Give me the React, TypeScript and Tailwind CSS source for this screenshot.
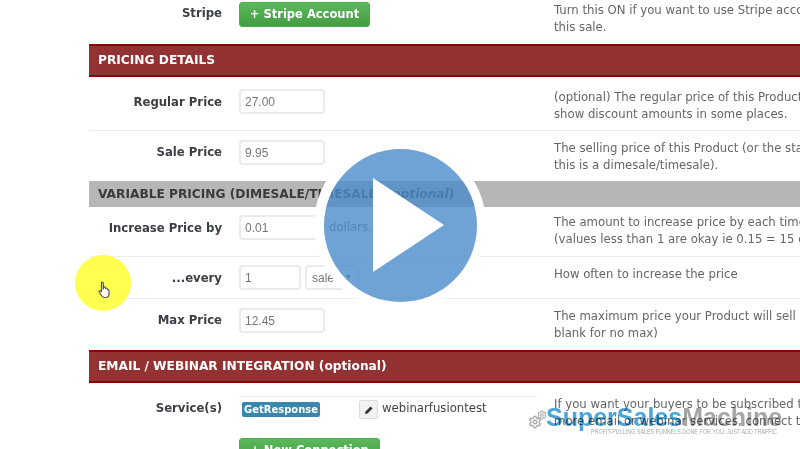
import type { ReactNode } from 'react';
import { Settings } from 'lucide-react';

const SANS = 'font-["DejaVu_Sans",sans-serif]';

function SectionHeader({ children }: { children: ReactNode }) {
  return (
    <div className="h-[33px] flex items-center pl-[9px] bg-[#933232] border-y-2 border-[#8a0505] text-white text-[12.2px] font-bold whitespace-nowrap">
      {children}
    </div>
  );
}

function Row({
  label,
  height,
  line = true,
  labelPt,
  ctlPt,
  descPt,
  children,
  desc,
}: {
  label: string;
  height: string;
  line?: boolean;
  labelPt: string;
  ctlPt: string;
  descPt: string;
  children?: ReactNode;
  desc: string[];
}) {
  return (
    <div className={`flex items-start ${height} ${line ? 'border-b border-[#ececec]' : ''}`}>
      <div className={`w-[133px] shrink-0 text-right text-[11.7px] leading-[17px] font-bold text-[#3c4046] whitespace-nowrap ${labelPt}`}>
        {label}
      </div>
      <div className={`w-[315px] ml-[17px] shrink-0 flex items-center ${ctlPt}`}>{children}</div>
      <div className={`text-[11.7px] leading-[17px] text-[#666] whitespace-nowrap ${descPt}`}>
        {desc.map((d) => (
          <div key={d}>{d}</div>
        ))}
      </div>
    </div>
  );
}

function Field({ value, width = 'w-[86px]' }: { value: string; width?: string }) {
  return (
    <div
      className={`${width} h-[25px] flex items-center pl-[4px] bg-white border-2 border-[#ebebeb] rounded-[4px] font-["Liberation_Sans",sans-serif] text-[12px] text-[#777]`}
    >
      {value}
    </div>
  );
}

function GreenButton({ children, width }: { children: ReactNode; width: string }) {
  return (
    <div
      className={`${width} h-[25px] flex items-center justify-center rounded-[3px] bg-gradient-to-b from-[#5cb85c] to-[#449d44] border border-[#4cae4c] text-white text-[11.5px] font-bold whitespace-nowrap`}
    >
      {children}
    </div>
  );
}

function PlayButton() {
  return (
    <svg className="absolute left-[310px] top-[135px]" width="180" height="180" viewBox="0 0 180 180">
      <path
        fillRule="evenodd"
        fill="#ffffff"
        d="M90 4a86 86 0 1 0 0 172a86 86 0 1 0 0-172zM90.500 14a76.500 76.500 0 1 1 0 153a76.500 76.500 0 1 1 0-153z"
      />
      <circle cx="90.500" cy="90.500" r="76.500" fill="#4b8ccc" fillOpacity="0.8" />
      <path d="M63 43L134 90L63 137z" fill="#ffffff" />
    </svg>
  );
}

function Highlight() {
  return (
    <div className="absolute left-[75px] top-[255px] w-[56px] h-[56px] rounded-full bg-[#ffff50] flex items-center justify-center">
      <svg width="13" height="18" viewBox="0 0 13 18" className="mt-[14px] ml-[3px]">
        <path
          d="M3.500 1.500c.8-.8 1.800-.3 1.800.8V8l.4-1.800c.9-.6 1.700-.2 1.800.7l.2.600c.8-.5 1.500-.2 1.600.6l.2.500c.8-.3 1.500.2 1.500 1V13c0 2-1.300 3.500-3.300 3.500H6.500c-1.500 0-2.300-.8-3-2L1.200 11c-.5-.9.500-1.800 1.400-1.100l.9.800z"
          fill="#ffffff"
          stroke="#55554a"
          strokeWidth="1.200"
          strokeLinejoin="round"
        />
      </svg>
    </div>
  );
}

function Watermark() {
  return (
    <div className="absolute left-[528px] top-[404px] w-[262px]">
      <div className="flex items-center">
        <div className="relative w-[18px] h-[26px] shrink-0 text-[#9a9a9a]/80">
          <Settings size={14} strokeWidth={2.5} className="absolute left-0 top-[11px]" />
          <Settings size={10} strokeWidth={2.5} className="absolute left-[9px] top-[6px]" />
        </div>
        <div className='font-["Liberation_Sans",sans-serif] font-bold text-[25px] leading-[26px] whitespace-nowrap mix-blend-multiply'>
          <span className="text-[#4aa5da]">SuperSales</span>
          <span className="text-[#a6a6a6]">Machine</span>
        </div>
      </div>
      <div className='ml-[63px] -mt-[2px] origin-left scale-x-[0.77] font-["Liberation_Sans",sans-serif] text-[7px] leading-[8px] text-[#a8a8a8] whitespace-nowrap'>
        PROFIT-PULLING SALES FUNNELS DONE FOR YOU. JUST ADD TRAFFIC
      </div>
    </div>
  );
}

export default function App() {
  return (
    <div className={`relative w-[800px] h-[449px] overflow-hidden bg-white blur-[0.4px] ${SANS}`}>
      <div className="pl-[89px]">
        <Row
          label="Stripe"
          height="h-[44px]"
          line={false}
          labelPt="pt-[5px]"
          ctlPt="pt-[2px]"
          descPt="pt-[2px]"
          desc={['Turn this ON if you want to use Stripe account for', 'this sale.']}
        >
          <GreenButton width="w-[131px]">+ Stripe Account</GreenButton>
        </Row>
        <SectionHeader>PRICING DETAILS</SectionHeader>
        <Row
          label="Regular Price"
          height="h-[54px]"
          labelPt="pt-[17px]"
          ctlPt="pt-[12px]"
          descPt="pt-[12px]"
          desc={['(optional) The regular price of this Product, used to', 'show discount amounts in some places.']}
        >
          <Field value="27.00" />
        </Row>
        <Row
          label="Sale Price"
          height="h-[50px]"
          line={false}
          labelPt="pt-[13px]"
          ctlPt="pt-[9px]"
          descPt="pt-[9px]"
          desc={['The selling price of this Product (or the starting price if', 'this is a dimesale/timesale).']}
        >
          <Field value="9.95" />
        </Row>
        <div className="h-[26px] flex items-center pl-[9px] pt-[1px] bg-[#b6b6b6] text-[#3a3a3a] text-[12.2px] font-bold whitespace-nowrap">
          VARIABLE PRICING (DIMESALE/TIMESALE) (<i>optional</i>)
        </div>
        <Row
          label="Increase Price by"
          height="h-[50px]"
          labelPt="pt-[13px]"
          ctlPt="pt-[8px]"
          descPt="pt-[7px]"
          desc={['The amount to increase price by each time', '(values less than 1 are okay ie 0.15 = 15 cents)']}
        >
          <Field value="0.01" />
          <span className="ml-[4px] text-[11.7px] text-[#666]">dollars.</span>
        </Row>
        <Row
          label="...every"
          height="h-[42px]"
          labelPt="pt-[13px]"
          ctlPt="pt-[8px]"
          descPt="pt-[9px]"
          desc={['How often to increase the price']}
        >
          <Field value="1" width="w-[62px]" />
          <div className='ml-[4px] w-[54px] h-[25px] flex items-center justify-between px-[5px] border-2 border-[#ebebeb] rounded-[4px] font-["Liberation_Sans",sans-serif] text-[12px] text-[#777]'>
            sales
            <span className="text-[7px] text-[#555]">▼</span>
          </div>
        </Row>
        <Row
          label="Max Price"
          height="h-[51px]"
          line={false}
          labelPt="pt-[13px]"
          ctlPt="pt-[9px]"
          descPt="pt-[9px]"
          desc={['The maximum price your Product will sell for (leave', 'blank for no max)']}
        >
          <Field value="12.45" />
        </Row>
        <SectionHeader>EMAIL / WEBINAR INTEGRATION (optional)</SectionHeader>
        <div className="flex">
          <div className="w-[133px] shrink-0 pt-[17px] text-right text-[11.7px] leading-[17px] font-bold text-[#3c4046]">Service(s)</div>
          <div className="w-[298px] ml-[17px] shrink-0">
            <div className="mt-[13px] h-[42px] border-t border-[#ececec] flex items-start pt-[3px]">
              <div className="ml-[3px] mt-[2px] w-[78px] h-[15px] flex items-center justify-center rounded-[2px] bg-[#3a87ad] text-white text-[10px] font-bold">
                GetResponse
              </div>
              <div className="ml-[39px] w-[19px] h-[19px] flex items-center justify-center rounded-[2px] bg-[#f2f2f2] border border-[#ddd]">
                <svg width="10" height="10" viewBox="0 0 10 10">
                  <path d="M1 9l.5-2.500L6.500 1.500l2 2L3.500 8.500z" fill="#333" />
                </svg>
              </div>
              <span className="ml-[4px] text-[11.7px] leading-[17px] text-[#444]">webinarfusiontest</span>
            </div>
            <GreenButton width="w-[141px]">+ New Connection</GreenButton>
          </div>
          <div className="ml-[17px] pt-[13px] text-[11.7px] leading-[17px] text-[#666] whitespace-nowrap">
            <div>If you want your buyers to be subscribed to</div>
            <div>more email or webinar services, connect them</div>
          </div>
        </div>
      </div>
      <Highlight />
      <PlayButton />
      <Watermark />
    </div>
  );
}
